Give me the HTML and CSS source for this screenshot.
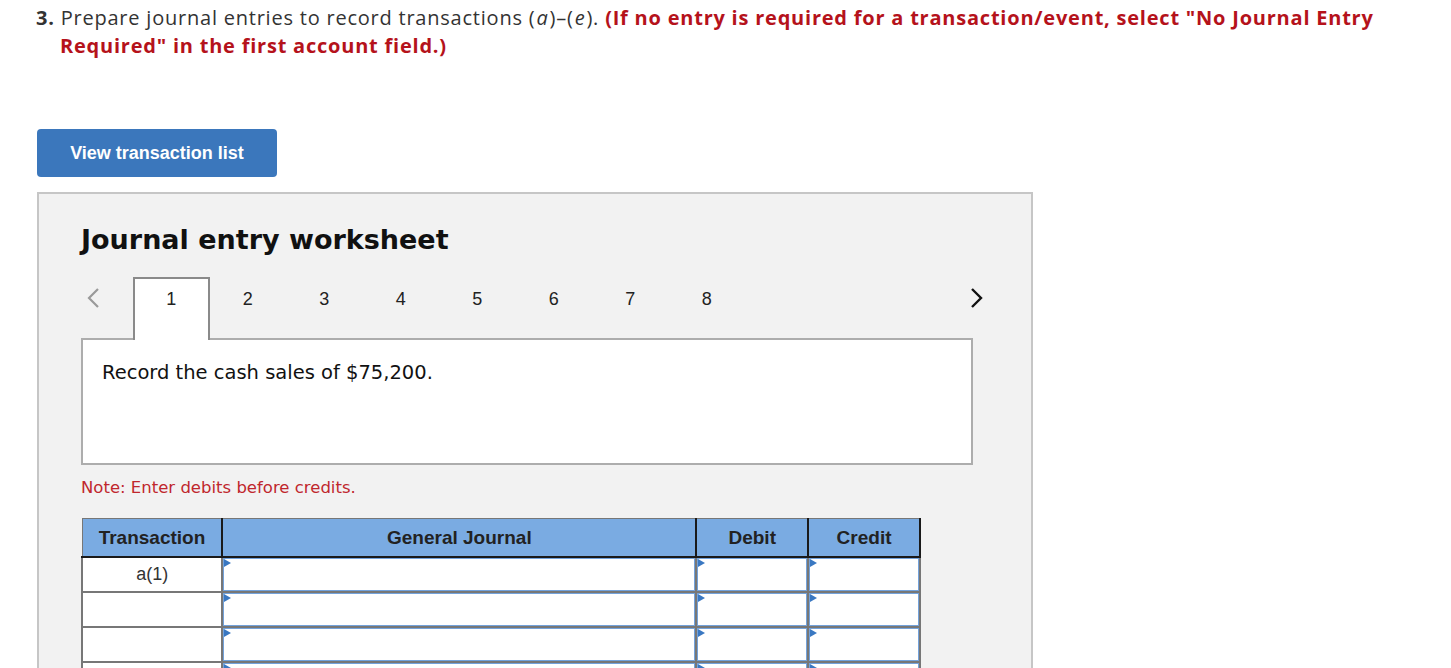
FILE: index.html
```html
<!DOCTYPE html>
<html>
<head>
<meta charset="utf-8">
<link rel="stylesheet" href="styles.css">
</head>
<body>
<p class="question"><span class="num">3.</span> Prepare journal entries to record transactions (<i>a</i>)–(<i>e</i>). <span class="warn">(If no entry is required for a transaction/event, select "No Journal Entry Required" in the first account field.)</span></p>

<button class="view-btn">View transaction list</button>

<div class="panel">
  <h2 class="panel-title">Journal entry worksheet</h2>
  <div class="tabs">
    <span class="chev chev-left"><svg width="16" height="22" viewBox="0 0 16 22"><polyline points="13,2 4,11 13,20" fill="none" stroke="#9a9a9a" stroke-width="2.2"/></svg></span>
    <span class="tab active">1</span>
    <span class="tab">2</span>
    <span class="tab">3</span>
    <span class="tab">4</span>
    <span class="tab">5</span>
    <span class="tab">6</span>
    <span class="tab">7</span>
    <span class="tab">8</span>
    <span class="tab-spacer"></span>
    <span class="chev chev-right"><svg width="16" height="22" viewBox="0 0 16 22"><polyline points="3,2 12,11 3,20" fill="none" stroke="#111" stroke-width="2.4"/></svg></span>
  </div>
  <div class="desc">Record the cash sales of $75,200.</div>
  <p class="note">Note: Enter debits before credits.</p>
  <table class="journal">
    <thead>
      <tr>
        <th class="c-tr">Transaction</th>
        <th class="c-gj">General Journal</th>
        <th class="c-dr">Debit</th>
        <th class="c-cr">Credit</th>
      </tr>
    </thead>
    <tbody>
      <tr>
        <td class="tr-cell">a(1)</td>
        <td class="in-cell"><div class="inp"></div></td>
        <td class="in-cell"><div class="inp"></div></td>
        <td class="in-cell"><div class="inp"></div></td>
      </tr>
      <tr>
        <td class="tr-cell"></td>
        <td class="in-cell"><div class="inp"></div></td>
        <td class="in-cell"><div class="inp"></div></td>
        <td class="in-cell"><div class="inp"></div></td>
      </tr>
      <tr>
        <td class="tr-cell"></td>
        <td class="in-cell"><div class="inp"></div></td>
        <td class="in-cell"><div class="inp"></div></td>
        <td class="in-cell"><div class="inp"></div></td>
      </tr>
      <tr>
        <td class="tr-cell"></td>
        <td class="in-cell"><div class="inp"></div></td>
        <td class="in-cell"><div class="inp"></div></td>
        <td class="in-cell"><div class="inp"></div></td>
      </tr>
    </tbody>
  </table>
</div>
</body>
</html>
```

FILE: styles.css
```css
html, body {
  margin: 0;
  padding: 0;
  background: #fff;
  overflow: hidden;
}
body {
  height: 668px;
}
.question {
  margin: 4px 40px 0 60px;
  text-indent: -24px;
  font-family: "Open Sans", "Liberation Sans", sans-serif;
  font-size: 20px;
  line-height: 28px;
  color: #333;
  letter-spacing: 0.78px;
}
.question i {
  display: inline-block;
  text-indent: 0;
  padding: 0 1px;
}
.question .num {
  font-weight: 700;
}
.question .warn {
  color: #b5121b;
  font-weight: 700;
}
.view-btn {
  display: block;
  margin: 69px 0 0 37px;
  width: 240px;
  height: 48px;
  border: none;
  border-radius: 4px;
  background: #3b77bc;
  color: #fff;
  font-family: "Liberation Sans", Arial, sans-serif;
  font-weight: 700;
  font-size: 18px;
}
.panel {
  margin: 15px 0 0 37px;
  width: 996px;
  height: 600px;
  background: #f2f2f2;
  border: 2px solid #c6c6c6;
  padding: 0 0 0 42px;
  box-sizing: border-box;
}
.panel-title {
  margin: 27px 0 0 0;
  font-family: "DejaVu Sans", Verdana, sans-serif;
  font-weight: 700;
  font-size: 27px;
  line-height: 38px;
  color: #111;
}
.tabs {
  margin-top: 18px;
  display: flex;
  align-items: stretch;
  width: 918px;
  height: 61px;
  font-family: "Liberation Sans", Arial, sans-serif;
  font-size: 18px;
  color: #222;
  position: relative;
  z-index: 1;
}
.chev {
  width: 52px;
  display: flex;
  padding-top: 10px;
  box-sizing: border-box;
}
.chev-left {
  justify-content: flex-start;
  padding-left: 4px;
}
.chev-right {
  width: 30px;
  justify-content: flex-start;
  padding-top: 10px;
}
.tab {
  width: 76.5px;
  text-align: center;
  padding-top: 12px;
  box-sizing: border-box;
}
.tab.active {
  background: #fff;
  border: 2px solid #8a8a8a;
  border-bottom: none;
  padding-top: 10px;
  height: 63px;
}
.tab-spacer {
  flex: 1;
}
.desc {
  width: 892px;
  height: 127px;
  box-sizing: border-box;
  background: #fff;
  border: 2px solid #adadad;
  padding: 21px 0 0 19px;
  font-family: "DejaVu Sans", Verdana, sans-serif;
  font-size: 19.5px;
  color: #111;
}
.note {
  margin: 12px 0 0 0;
  font-family: "DejaVu Sans", Verdana, sans-serif;
  font-size: 16.5px;
  color: #c0272d;
  line-height: 22px;
}
.journal {
  margin-top: 19px;
  border-collapse: collapse;
  width: 840px;
  font-family: "Liberation Sans", Arial, sans-serif;
}
.journal th {
  background: #7aabe2;
  color: #222;
  font-size: 19px;
  font-weight: 700;
  height: 37px;
  padding: 0;
  border-top: 1px solid #777;
  border-bottom: 2px solid #1a1a1a;
  border-left: 2px solid #1a1a1a;
  border-right: 2px solid #1a1a1a;
}
.journal th.c-tr {
  border-left: 1px solid #777;
  width: 139px;
}
.journal th.c-gj {
  width: 473px;
}
.journal th.c-dr {
  width: 110px;
}
.journal th.c-cr {
  width: 110px;
}
.journal td {
  height: 35px;
  padding: 0;
  border: 2px solid #777;
  background: #fff;
  box-sizing: border-box;
}
.journal td.tr-cell {
  text-align: center;
  font-size: 18px;
  color: #333;
}
.journal td.in-cell {
  position: relative;
}
.inp {
  height: 31px;
  border: 1px solid #73a2db;
  background: #fff;
  position: relative;
}
.inp::before {
  content: "";
  position: absolute;
  left: 0;
  top: 0;
  border-left: 7px solid #3a78c2;
  border-top: 4px solid transparent;
  border-bottom: 4px solid transparent;
}
```
